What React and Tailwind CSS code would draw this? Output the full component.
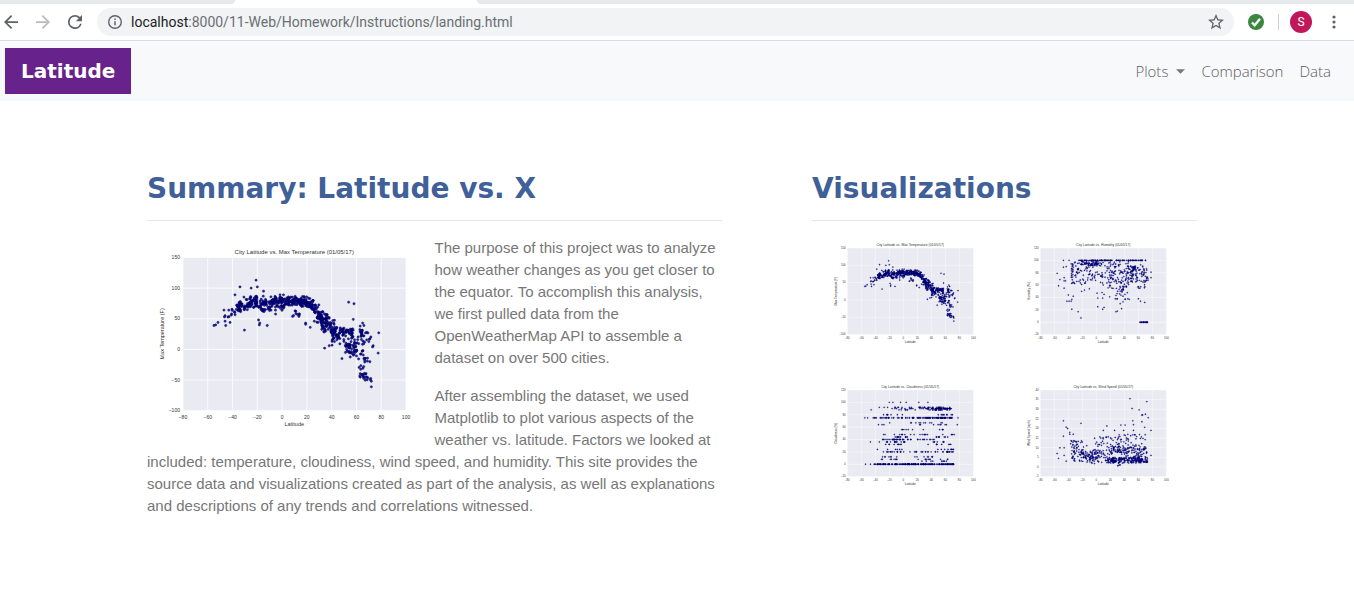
import React from "react";

/* ---------- sample data ---------- */

function makeRandom(seed) {
  let a = seed;
  return () => {
    a = (a + 0x6d2b79f5) | 0;
    let t = Math.imul(a ^ (a >>> 15), 1 | a);
    t = (t + Math.imul(t ^ (t >>> 7), 61 | t)) ^ t;
    return ((t ^ (t >>> 14)) >>> 0) / 4294967296;
  };
}

function gauss(rnd) {
  return Math.sqrt(-2 * Math.log(rnd() + 1e-9)) * Math.cos(2 * Math.PI * rnd());
}

function spread(rnd, from, to, count, makeY) {
  return Array.from({ length: count }, () => {
    const x = from + rnd() * (to - from);
    return [x, makeY(x)];
  });
}

function temperatureData() {
  const rnd = makeRandom(7);
  const bands = [
    [-47, -38, 6, 56, 64, 4],
    [-39, -32, 24, 63, 70, 5],
    [-36, -32, 16, 69, 70, 4],
    [-32, -25, 26, 73, 75, 6],
    [-26, -20, 38, 77, 78, 4.5],
    [-20, -10, 30, 75, 77, 6],
    [-17, -8, 12, 63, 67, 3],
    [-10, 0, 62, 79, 79, 5],
    [-10, 4, 8, 63, 67, 4],
    [0, 10, 54, 79, 79, 5],
    [10, 20, 58, 79, 78, 4],
    [8, 14, 9, 57, 60, 3],
    [20, 28, 42, 76, 66, 5],
    [28, 34, 44, 60, 45, 9],
    [31, 38, 42, 48, 38, 8],
    [38, 45, 44, 38, 24, 9],
    [40, 50, 26, 22, 20, 9],
    [48, 57, 36, 29, 28, 3],
    [51, 61, 40, 6, 0, 8],
    [56, 66, 34, 18, 5, 13],
    [62, 72, 20, 24, 18, 9],
    [60, 71, 14, -15, -25, 8],
    [62, 72, 19, -42, -45, 4],
  ];
  const points = [
    [-21, 113], [-34, 102], [-25, 100], [-20, 102], [-15, 95], [-38, 89],
    [-55, 39], [-53.6, 40], [-51.7, 44], [-46, 55], [-46.5, 53], [-46, 46],
    [-45.5, 39], [-42, 44], [-43, 64], [-41, 56], [-30.4, 31.5], [-19, 48],
    [-18, 43], [-18.4, 40], [-12, 39], [53.7, 77], [58, 74.5], [57.4, 49],
    [78, 27], [77.5, -6], [34.3, 2], [48.3, -15], [72, -61], [72, -52],
    [22.7, 36], [19, 43], [19, 41], [26, 46], [38, 6], [73.5, 6], [73, 4],
    [65, 43], [66, 39], [63, 38],
  ];
  bands.forEach(([from, to, count, a, b, sd]) => {
    points.push(
      ...spread(rnd, from, to, count, (x) => {
        const mid = a + ((b - a) * (x - from)) / (to - from);
        const off = Math.max(-2, Math.min(2, gauss(rnd)));
        return mid + off * sd;
      })
    );
  });
  return points;
}

function humidityData() {
  const rnd = makeRandom(21);
  return [
    [-56, 79], [-54, 59], [-52, 69], [-46, 55], [-47, 100], [-47, 89],
    [-46, 72], [-46, 67], [-44, 67], [-39, 100], [-43, 90], [-22, 7],
    [-26, 17], [-35, 21], [-40, 44], [-42, 34], [-39, 34], [-36, 34],
    [-35, 37], [-33, 42], [1, 47], [2, 25], [2, 39], [9, 21], [11, 24],
    [9, 39], [19, 41], [11, 45], [28, 17], [30, 18], [36, 22], [34, 30],
    [38, 33], [45, 38], [47, 37], [69, 32], [63, 34], [60, 38], [78, 81],
    [78, 72], [27, 38], [8, 48], [-21, 50], [-17, 52], [-10, 54],
    ...spread(rnd, -26, 73, 95, () => 100),
    ...spread(rnd, -22, 4, 55, () => 100 - rnd() * 9),
    ...spread(rnd, -38, 20, 105, () => 98 - rnd() * 38),
    ...spread(rnd, -36, -33, 14, () => 95 - rnd() * 34),
    ...spread(rnd, 15, 50, 105, () => 98 - rnd() * 44),
    ...spread(rnd, 28, 45, 26, () => 64 - rnd() * 28),
    ...spread(rnd, 45, 74, 75, () => 93 - rnd() * 28),
    ...spread(rnd, 49, 57, 28, () => 92 - rnd() * 18),
    ...spread(rnd, 58, 71, 8, () => 62 - rnd() * 7),
    ...spread(rnd, 62, 73, 16, () => 0),
  ];
}

function cloudinessData() {
  const rnd = makeRandom(33);
  const rows = [
    [92, -36, 70, 32], [90, -24, 68, 20], [90, 33, 68, 50], [88, -8, 66, 14],
    [88, 40, 56, 14], [80, -30, 0, 7], [80, 48, 72, 9], [75, -42, 70, 68],
    [75, 28, 70, 45], [67, -36, 64, 12], [64, -36, 66, 11], [56, -28, 60, 11],
    [48, -30, 74, 22], [44, -12, 8, 12], [44, 45, 68, 8], [40, -30, 12, 28],
    [40, 18, 44, 11], [36, -44, 2, 16], [36, 34, 66, 7], [32, -32, 2, 9],
    [32, 26, 70, 8], [24, -38, 4, 6], [24, 48, 72, 9], [20, -30, 12, 17],
    [20, 14, 72, 28], [12, -32, -8, 7], [12, 14, 56, 8], [8, -46, -8, 8],
    [8, 18, 72, 10], [5, 18, 62, 9], [0, -42, 0, 52], [0, 0, 72, 120],
  ];
  const points = [
    [-20, 100], [-15, 100], [-4, 100], [4, 100], [22, 100], [35, 100],
    [-46, 88], [-55, 75], [-51, 75], [-43, 75], [78, 75], [77, 64],
    [-54, 0], [-47, 0], [-47, 36],
  ];
  rows.forEach(([y, from, to, count]) => {
    points.push(...spread(rnd, from, to, count, () => y));
  });
  return points;
}

function windData() {
  const rnd = makeRandom(58);
  return [
    [48, 35.5], [72, 34], [51, 30.4], [61, 29.7], [70, 27.4], [65, 27],
    [66, 27], [74, 25.6], [52, 24], [53, 22], [65, 23.5], [69, 20.6],
    [78, 19], [-47, 24], [-43, 20.7], [-41, 20], [-22, 22.7], [15, 21.3],
    [10, 19], [35, 21.8], [41, 21.8], [78, 6], [-56, 7], [-54, 4.5],
    [-52, 10], [-46, 10], [-46, 6], [-43, 3], [-47, 16], [-38, 18],
    [-38, 17], [-33, 17], [53, 19], [39, 19], [26, 19],
    ...spread(rnd, -38, -18, 62, () => 3 + rnd() * 11),
    ...spread(rnd, -22, 4, 88, () => 1.4 + (rnd() + rnd()) * 4),
    ...spread(rnd, -16, 6, 7, () => 8 + rnd() * 7),
    ...spread(rnd, 2, 18, 40, () => 2 + rnd() * 14),
    ...spread(rnd, 16, 73, 170, () => 2 + rnd() * 3),
    ...spread(rnd, 18, 73, 130, () => 3 + rnd() * 8),
    ...spread(rnd, 20, 72, 85, () => 7 + rnd() * 10),
    ...spread(rnd, 30, 34, 4, () => 0.6 + rnd()),
  ];
}

function steps(from, to, by) {
  const out = [];
  for (let v = from; v <= to; v += by) out.push(v);
  return out;
}

const CHARTS = {
  temperature: {
    title: "City Latitude vs. Max Temperature (01/05/17)",
    label: "Max Temperature (F)",
    ticks: steps(-100, 150, 50),
    points: temperatureData(),
  },
  humidity: {
    title: "City Latitude vs. Humidity (01/05/17)",
    label: "Humidity (%)",
    ticks: steps(-20, 120, 20),
    points: humidityData(),
  },
  cloudiness: {
    title: "City Latitude vs. Cloudiness (01/05/17)",
    label: "Cloudiness (%)",
    ticks: steps(-20, 120, 20),
    points: cloudinessData(),
  },
  wind: {
    title: "City Latitude vs. Wind Speed (01/05/17)",
    label: "Wind Speed (mph)",
    ticks: steps(-5, 40, 5),
    points: windData(),
  },
};

/* ---------- chart ---------- */

const BOX = { left: 72, right: 519, top: 39, bottom: 346 };
const LATITUDES = steps(-80, 100, 20);

function ScatterChart({ chart, className }) {
  const { title, label, ticks, points } = chart;
  const low = ticks[0];
  const high = ticks[ticks.length - 1];
  const px = (v) => BOX.left + ((v + 80) / 180) * (BOX.right - BOX.left);
  const py = (v) => BOX.bottom - ((v - low) / (high - low)) * (BOX.bottom - BOX.top);
  const minus = (v) => String(v).replace("-", "−");

  return (
    <svg
      viewBox="0 0 576 384"
      role="img"
      aria-label={title}
      className={className}
      fontFamily="'Liberation Sans', Arial, sans-serif"
      fill="#333333"
    >
      <rect x={BOX.left} y={BOX.top} width={BOX.right - BOX.left} height={BOX.bottom - BOX.top} fill="#eaeaf2" />
      <g stroke="#ffffff" strokeWidth="2" opacity="0.8">
        {LATITUDES.map((v) => (
          <line key={v} x1={px(v)} x2={px(v)} y1={BOX.top} y2={BOX.bottom} />
        ))}
        {ticks.map((v) => (
          <line key={v} x1={BOX.left} x2={BOX.right} y1={py(v)} y2={py(v)} />
        ))}
      </g>
      <g fill="#0000c8" fillOpacity="0.85" stroke="#00001c" strokeOpacity="0.8" strokeWidth="1">
        {points.map(([x, y], i) => (
          <circle key={i} cx={px(x)} cy={py(y)} r="2.3" />
        ))}
      </g>
      <text x="295" y="33" fontSize="12" textAnchor="middle">{title}</text>
      <g fontSize="10">
        {LATITUDES.map((v) => (
          <text key={v} x={px(v)} y="362" textAnchor="middle">{minus(v)}</text>
        ))}
        {ticks.map((v) => (
          <text key={v} x="66" y={py(v) + 3} textAnchor="end">{minus(v)}</text>
        ))}
      </g>
      <text x="295" y="376" fontSize="11" textAnchor="middle">Latitude</text>
      <text x="34" y="192" fontSize="11" textAnchor="middle" transform="rotate(-90 34 192)">{label}</text>
    </svg>
  );
}

/* ---------- browser frame ---------- */

function IconButton({ label, className = "", children }) {
  return (
    <button type="button" aria-label={label} className={`flex shrink-0 items-center justify-center ${className}`}>
      {children}
    </button>
  );
}

function BrowserBar() {
  return (
    <header className="border-b border-[#dadce0] bg-white">
      <div className="flex h-1">
        <div className="w-[235px] rounded-br-md bg-[#e7eaed]" />
        <div className="w-[242px]" />
        <div className="flex-1 rounded-bl-md bg-[#e7eaed]" />
      </div>
      <div className="flex h-9 items-center">
        <IconButton label="Back" className="w-[22px]">
          <svg viewBox="4 4 16 16" className="size-3.5" fill="#5f6368">
            <path d="M20 11H7.83l5.59-5.59L12 4l-8 8 8 8 1.41-1.41L7.83 13H20v-2z" />
          </svg>
        </IconButton>
        <IconButton label="Forward" className="ml-2.5 w-[22px]">
          <svg viewBox="4 4 16 16" className="size-3.5" fill="#babcbe">
            <path d="M12 4l-1.41 1.41L16.17 11H4v2h12.17l-5.58 5.59L12 20l8-8z" />
          </svg>
        </IconButton>
        <IconButton label="Reload" className="ml-2.5 w-[22px]">
          <svg viewBox="4 4 16 16" className="size-3.5" fill="#5f6368">
            <path d="M17.65 6.35A7.96 7.96 0 0 0 12 4a8 8 0 1 0 7.73 10h-2.08A6 6 0 1 1 12 6c1.66 0 3.14.69 4.22 1.78L13 11h7V4l-2.35 2.35z" />
          </svg>
        </IconButton>
        <div className="ml-[11px] flex h-7 flex-1 items-center rounded-full bg-[#f1f3f4] px-[10px]">
          <svg viewBox="0 0 16 16" className="size-4 shrink-0" fill="none" stroke="#5f6368">
            <circle cx="8" cy="8" r="6.3" strokeWidth="1.4" />
            <path d="M8 7.2v4M8 4.6v1.5" strokeWidth="1.5" />
          </svg>
          <p aria-label="Address" className="ml-2 flex-1 whitespace-nowrap font-['Roboto',sans-serif] text-sm text-[#6b6f73]">
            <span className="text-[#202124]">localhost</span>:8000/11-Web/Homework/Instructions/landing.html
          </p>
          <IconButton label="Bookmark this page">
            <svg viewBox="2 2 20 20" className="size-4" fill="#5f6368">
              <path d="M22 9.24l-7.19-.62L12 2 9.19 8.63 2 9.24l5.46 4.73L5.82 21 12 17.27 18.18 21l-1.63-7.03L22 9.24zM12 15.4l-3.76 2.27 1-4.28-3.32-2.88 4.38-.38L12 6.1l1.71 4.04 4.38.38-3.32 2.88 1 4.28L12 15.4z" />
            </svg>
          </IconButton>
        </div>
        <IconButton label="Extension" className="ml-3.5">
          <svg viewBox="0 0 16 16" className="size-4">
            <circle cx="8" cy="8" r="8" fill="#3c873f" />
            <path d="M4 8.4l2.7 2.9L12 4.8" fill="none" stroke="#fff" strokeWidth="2.2" />
          </svg>
        </IconButton>
        <div className="ml-3.5 h-4 w-px bg-[#cfd1d4]" />
        <button
          type="button"
          aria-label="Profile S"
          className="ml-[11px] flex size-[22px] items-center justify-center rounded-full bg-[#c2185b] font-['Roboto',sans-serif] text-xs text-white"
        >
          S
        </button>
        <IconButton label="Menu" className="mr-3 ml-3.5 w-4">
          <svg viewBox="0 0 4 14" className="h-3.5 w-1" fill="#5f6368">
            <circle cx="2" cy="2" r="1.6" />
            <circle cx="2" cy="7" r="1.6" />
            <circle cx="2" cy="12" r="1.6" />
          </svg>
        </IconButton>
      </div>
    </header>
  );
}

/* ---------- page ---------- */

function NavBar() {
  return (
    <nav className="flex h-[60px] items-center justify-between bg-[#f8f9fa] pr-[23px] pl-[5px]">
      <a
        href="#home"
        className="flex h-[46px] items-center bg-[#68228b] px-4 font-['DejaVu_Sans',Verdana,sans-serif] text-xl font-bold text-white"
      >
        Latitude
      </a>
      <div className="flex items-center gap-4 font-['Open_Sans','Noto_Sans',sans-serif] text-[15px] font-light text-[#5c5c5d]">
        <button type="button" className="flex items-center gap-2">
          Plots
          <svg viewBox="0 0 10 5" className="h-[5px] w-[9px]" fill="#77787a">
            <path d="M0 0h10L5 5z" />
          </svg>
        </button>
        <a href="#comparison">Comparison</a>
        <a href="#data">Data</a>
      </div>
    </nav>
  );
}

function SectionHeading({ children }) {
  return (
    <h1 className="mb-4 border-b border-[#e5e5e5] pb-3 font-['DejaVu_Sans',Verdana,sans-serif] text-[28px] leading-[38px] font-bold whitespace-nowrap text-[#3f6098]">
      {children}
    </h1>
  );
}

export default function App() {
  return (
    <div className="bg-white">
      <BrowserBar />
      <NavBar />
      <main className="pt-[69px] pr-[10px]">
        <div className="mx-auto grid max-w-[1050px] grid-cols-[575fr_385fr] gap-[90px]">
          <section>
            <SectionHeading>Summary: Latitude vs. X</SectionHeading>
            <div className="font-['Liberation_Sans',Arial,sans-serif] text-[15px] leading-[22px] text-[#777777]">
              <div className="float-left w-1/2 pt-px pb-2">
                <ScatterChart chart={CHARTS.temperature} className="block w-full" />
              </div>
              <p className="mb-4">
                The purpose of this project was to analyze how weather changes as you get closer to the
                equator. To accomplish this analysis, we first pulled data from the OpenWeatherMap API to
                assemble a dataset on over 500 cities.
              </p>
              <p>
                After assembling the dataset, we used Matplotlib to plot various aspects of the weather vs.
                latitude. Factors we looked at included: temperature, cloudiness, wind speed, and humidity.
                This site provides the source data and visualizations created as part of the analysis, as
                well as explanations and descriptions of any trends and correlations witnessed.
              </p>
            </div>
          </section>
          <section>
            <SectionHeading>Visualizations</SectionHeading>
            <div className="grid grid-cols-2 gap-x-[30px] gap-y-[34px] px-[15px]">
              <a href="#temperature"><ScatterChart chart={CHARTS.temperature} className="block w-full" /></a>
              <a href="#humidity"><ScatterChart chart={CHARTS.humidity} className="block w-full" /></a>
              <a href="#cloudiness"><ScatterChart chart={CHARTS.cloudiness} className="block w-full" /></a>
              <a href="#wind"><ScatterChart chart={CHARTS.wind} className="block w-full" /></a>
            </div>
          </section>
        </div>
      </main>
    </div>
  );
}
